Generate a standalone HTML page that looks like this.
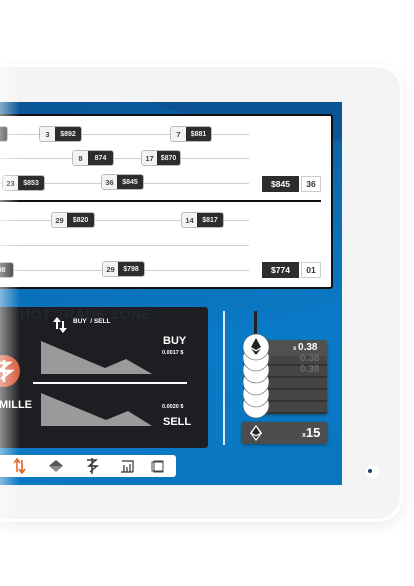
<!DOCTYPE html>
<html><head><meta charset="utf-8"><style>
*{margin:0;padding:0;box-sizing:border-box}
body{width:414px;height:586px;background:#fff;position:relative;overflow:hidden;font-family:"Liberation Sans",sans-serif}
.abs{position:absolute}
.frame{left:-60px;top:64px;width:463px;height:458px;border-radius:26px;background:#f4f4f4;border:3px solid #fff;box-shadow:0 4px 14px rgba(0,0,0,.08)}
.screen{left:0;top:102px;width:342px;height:383px;background:linear-gradient(170deg,#0a5596 0%,#0b6db4 35%,#0a78c4 60%,#0b6fb8 100%)}
.board{left:-4px;top:114px;width:337px;height:175px;background:#fff;border:2px solid #111;border-radius:3px}
.ln{height:1px;background:#cfcfcf;left:0;width:249px}
.tag{height:14px;display:flex;font-size:7px;font-weight:bold;border-radius:2px;overflow:hidden;box-shadow:0 0 0 1px #bbb}
.tag .c{background:#f3f3f3;color:#444;width:15px;display:flex;align-items:center;justify-content:center;font-size:7.5px}
.tag .p{background:#2d2d2d;color:#eee;flex:1;display:flex;align-items:center;justify-content:center}
.big{background:#2d2d2d;color:#fff;font-size:8.5px;font-weight:bold;display:flex;align-items:center;justify-content:center;height:16px}
.wb{background:#fff;border:1px solid #ccc;color:#333;font-size:8.5px;font-weight:bold;display:flex;align-items:center;justify-content:center;height:16px}
.dark{left:-4px;top:307px;width:212px;height:141px;background:#1c1e21;border-radius:3px}
.w{color:#fff;font-weight:bold}
</style></head><body>
<div class="abs frame"></div>
<div class="abs" style="left:366px;top:465px;width:13px;height:13px;border-radius:50%;background:#fff"></div>
<div class="abs" style="left:368px;top:469px;width:4px;height:4px;border-radius:50%;background:#1d3f6a"></div>
<div class="abs screen">
<svg width="342" height="383" style="position:absolute;left:0;top:0"><path d="M0 230 C100 200 200 260 342 200 L342 383 L0 383Z" fill="#0a80cc" opacity=".35"/><path d="M150 0 C220 30 280 10 342 40 L342 0Z" fill="#0a4a86" opacity=".5"/></svg>
</div>
<div class="abs board"></div>
<div class="abs ln" style="top:134px"></div>
<div class="abs ln" style="top:158px"></div>
<div class="abs ln" style="top:183px"></div>
<div class="abs ln" style="top:220px"></div>
<div class="abs ln" style="top:245px"></div>
<div class="abs ln" style="top:270px"></div>
<div class="abs" style="left:0;top:200px;width:321px;height:2px;background:#111"></div>

<div class="abs tag" style="left:-10px;top:127px;width:17px"><div class="p">5</div></div>
<div class="abs tag" style="left:40px;top:127px;width:41px"><div class="c">3</div><div class="p">$892</div></div>
<div class="abs tag" style="left:171px;top:127px;width:40px"><div class="c">7</div><div class="p">$881</div></div>
<div class="abs tag" style="left:73px;top:151px;width:40px"><div class="c">8</div><div class="p">874</div></div>
<div class="abs tag" style="left:142px;top:151px;width:38px"><div class="c">17</div><div class="p">$870</div></div>
<div class="abs tag" style="left:3px;top:176px;width:41px"><div class="c">23</div><div class="p">$853</div></div>
<div class="abs tag" style="left:102px;top:175px;width:41px"><div class="c">36</div><div class="p">$845</div></div>
<div class="abs big" style="left:262px;top:176px;width:37px">$845</div>
<div class="abs wb" style="left:301px;top:176px;width:20px">36</div>
<div class="abs tag" style="left:52px;top:213px;width:42px"><div class="c">29</div><div class="p">$820</div></div>
<div class="abs tag" style="left:182px;top:213px;width:41px"><div class="c">14</div><div class="p">$817</div></div>
<div class="abs tag" style="left:-10px;top:263px;width:23px"><div class="p">98</div></div>
<div class="abs tag" style="left:103px;top:262px;width:41px"><div class="c">29</div><div class="p">$798</div></div>
<div class="abs big" style="left:262px;top:262px;width:37px">$774</div>
<div class="abs wb" style="left:301px;top:262px;width:20px">01</div>

<div class="abs dark"></div>
<div class="abs" style="left:20px;top:306px;font-size:14px;color:#25282c;font-weight:bold;letter-spacing:.5px">HOT TRADE ZONE</div>
<svg class="abs" style="left:52px;top:316px" width="16" height="18"><path d="M5 1 L1 6 H4 V13 H6 V6 H9Z M11 17 L15 12 H12 V5 H10 V12 H7Z" fill="#fff"/></svg>
<div class="abs w" style="left:73px;top:318px;font-size:6.5px">BUY &nbsp;/ SELL</div>
<svg class="abs" style="left:0;top:330px" width="210" height="110">
<circle cx="4" cy="41" r="16" fill="#d65a3a"/><path d="M-3 33 H9 L-1 41 H11 L1 49 M4 30 V52" stroke="#fff" stroke-width="2.5" fill="none"/>
<path d="M41 11 L105 38 L126 29 L152 44 L41 44Z" fill="#9a9a9a"/>
<path d="M41 63 L106 90 L128 81 L152 96 L41 96Z" fill="#9a9a9a"/>
<rect x="33" y="52" width="154" height="2" fill="#fff"/>
</svg>
<div class="abs w" style="left:163px;top:335px;font-size:11px">BUY</div>
<div class="abs w" style="left:162px;top:350px;font-size:5.5px">0.0017 $</div>
<div class="abs w" style="left:162px;top:404px;font-size:5.5px">0.0020 $</div>
<div class="abs w" style="left:163px;top:416px;font-size:11px">SELL</div>
<div class="abs w" style="left:-1px;top:399px;font-size:11px">MILLE</div>

<div class="abs" style="left:223px;top:311px;width:1.5px;height:134px;background:#dfe9f3"></div>

<div class="abs" style="left:254px;top:311px;width:3px;height:28px;background:#222"></div>
<div class="abs" style="left:256px;top:342px;width:71px;height:72px;background:repeating-linear-gradient(180deg,#454545 0,#454545 10px,#333 10px,#333 12px);border-radius:2px;box-shadow:0 1px 3px rgba(0,0,0,.4)"></div>
<div class="abs" style="left:256px;top:340px;width:71px;height:16px;background:#505050;border-radius:2px"></div>
<div class="abs w" style="left:293px;top:342px;font-size:10px"><span style="font-size:6px">x </span>0.38</div>
<div class="abs" style="left:300px;top:353px;font-size:10px;color:#6a6a6a;font-weight:bold">0.38</div>
<div class="abs" style="left:300px;top:364px;font-size:10px;color:#6a6a6a;font-weight:bold">0.38</div>
<svg class="abs" style="left:240px;top:330px" width="32" height="90">
<g fill="#fff" stroke="#555" stroke-width=".6">
<circle cx="16" cy="75" r="13"/><circle cx="16" cy="64" r="13"/><circle cx="16" cy="52" r="13"/><circle cx="16" cy="40" r="13"/><circle cx="16" cy="28" r="13"/><circle cx="16" cy="17" r="13"/></g>
<path d="M16 8 L11 17 L16 20 L21 17Z M11 18.5 L16 25 L21 18.5 L16 21.5Z" fill="#222"/>
</svg>
<div class="abs" style="left:242px;top:422px;width:85px;height:22px;background:#4d4d4d;border-radius:2px;box-shadow:0 1px 3px rgba(0,0,0,.4)"></div>
<svg class="abs" style="left:249px;top:424px" width="14" height="18"><path d="M7 1 L1 9 L7 17 L13 9Z" fill="#fff"/><path d="M7 3 L3 9 L7 11 L11 9Z M3.5 10.5 L7 15 L10.5 10.5 L7 12.5Z" fill="#222"/></svg>
<div class="abs w" style="left:302px;top:425px;font-size:13px"><span style="font-size:7px">x</span>15</div>

<div class="abs" style="left:-4px;top:455px;width:180px;height:22px;background:#fff;border-radius:3px"></div>
<svg class="abs" style="left:0;top:455px" width="176" height="22">
<path d="M17 4 V17 M14 8 L17 4 L20 8 M22 5 V18 M19 14 L22 18 L25 14" stroke="#e06020" stroke-width="1.6" fill="none"/>
<path d="M56 5 L63 11 L56 17 L49 11Z" fill="#888"/><path d="M49 11 L56 5 L63 11" fill="#555"/>
<path d="M87 5 H96 L89 11 H97 L90 17 M92 3 V19" stroke="#333" stroke-width="1.4" fill="none"/>
<path d="M122 6 H133 V17 M124 10 V17 M127 12 V17 M130 9 V17 M121 17 H133" stroke="#333" stroke-width="1.2" fill="none"/>
<rect x="152" y="7" width="11" height="9" stroke="#444" fill="none"/><rect x="154" y="6" width="9" height="11" stroke="#444" fill="none"/>
</svg>
<div class="abs" style="left:0;top:0;width:20px;height:586px;background:linear-gradient(90deg,rgba(255,255,255,.5),rgba(255,255,255,0))"></div>
</body></html>
